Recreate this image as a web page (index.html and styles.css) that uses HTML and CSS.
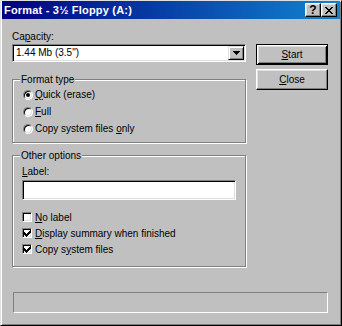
FILE: index.html
```html
<!DOCTYPE html>
<html>
<head>
<meta charset="utf-8">
<link rel="stylesheet" href="styles.css">
</head>
<body>
<div class="window">
  <div class="titlebar">
    <span class="title">Format - 3½ Floppy (A:)</span>
    <div class="tb-buttons">
      <span class="tb-btn tb-help">?</span>
      <span class="tb-btn tb-close"><svg width="8" height="7" viewBox="0 0 8 7" shape-rendering="crispEdges"><path fill="#000" d="M0 0h2v1h-2zM6 0h2v1h-2zM1 1h2v1h-2zM5 1h2v1h-2zM2 2h4v1h-4zM3 3h2v1h-2zM2 4h4v1h-4zM1 5h2v1h-2zM5 5h2v1h-2zM0 6h2v1h-2zM6 6h2v1h-2z"/></svg></span>
    </div>
  </div>
  <div class="body">
    <div class="main">
      <div class="field-label">Ca<u>p</u>acity:</div>
      <div class="select">
        <span class="select-value">1.44 Mb (3.5")</span>
        <span class="select-arrow"><svg width="7" height="4" viewBox="0 0 7 4" shape-rendering="crispEdges"><path fill="#000" d="M0 0h7v1h-7zM1 1h5v1h-5zM2 2h3v1h-3zM3 3h1v1h-1z"/></svg></span>
      </div>
      <div class="group group-format">
        <div class="legend">Format type</div>
        <div class="option radio-row"><span class="radio checked"></span><span><u>Q</u>uick (erase)</span></div>
        <div class="option radio-row"><span class="radio"></span><span><u>F</u>ull</span></div>
        <div class="option radio-row"><span class="radio"></span><span>Copy system files <u>o</u>nly</span></div>
      </div>
      <div class="group group-other">
        <div class="legend">Other options</div>
        <div class="field-label label-row"><u>L</u>abel:</div>
        <div class="textbox"></div>
        <div class="checks">
          <div class="option check-row"><span class="checkbox"></span><span><u>N</u>o label</span></div>
          <div class="option check-row"><span class="checkbox checked"><svg width="7" height="7" viewBox="0 0 7 7" shape-rendering="crispEdges"><path fill="#000" d="M6 0h1v1h-1zM5 1h2v1h-2zM0 2h1v1h-1zM4 2h3v1h-3zM0 3h2v1h-2zM3 3h3v1h-3zM0 4h5v1h-5zM1 5h3v1h-3zM2 6h1v1h-1z"/></svg></span><span><u>D</u>isplay summary when finished</span></div>
          <div class="option check-row"><span class="checkbox checked"><svg width="7" height="7" viewBox="0 0 7 7" shape-rendering="crispEdges"><path fill="#000" d="M6 0h1v1h-1zM5 1h2v1h-2zM0 2h1v1h-1zM4 2h3v1h-3zM0 3h2v1h-2zM3 3h3v1h-3zM0 4h5v1h-5zM1 5h3v1h-3zM2 6h1v1h-1z"/></svg></span><span>Copy s<u>y</u>stem files</span></div>
        </div>
      </div>
    </div>
    <div class="actions">
      <button class="btn btn-default"><u>S</u>tart</button>
      <button class="btn"><u>C</u>lose</button>
    </div>
  </div>
  <div class="status"></div>
</div>
</body>
</html>
```
FILE: styles.css
```css
* { box-sizing: border-box; }
html, body { margin: 0; padding: 0; background: #c0c0c0; }
body {
  font-family: "Liberation Sans", Arial, sans-serif;
  font-size: 10px;
  color: #000;
}
.window {
  width: 342px;
  height: 326px;
  display: flex;
  flex-direction: column;
  background: #c0c0c0;
  border: 1px solid;
  border-color: #dfdfdf #000 #000 #dfdfdf;
  box-shadow: inset 1px 1px #fff, inset -1px -1px #808080;
  padding: 0 1px 1px 1px;
}
.titlebar {
  height: 18px;
  flex: none;
  display: flex;
  align-items: center;
  padding: 0 3px 0 2px;
  background: linear-gradient(to right, #000080, #1084d0);
  color: #fff;
  font-weight: bold;
  font-size: 11px;
}
.title { flex: 1; white-space: nowrap; letter-spacing: 0.2px; }
.tb-buttons { display: flex; }
.tb-btn {
  width: 16px;
  height: 14px;
  background: #c0c0c0;
  border: 1px solid;
  border-color: #fff #000 #000 #fff;
  box-shadow: inset -1px -1px #808080, inset 1px 1px #dfdfdf;
  display: flex;
  align-items: center;
  justify-content: center;
  color: #000;
  font-weight: bold;
  font-size: 12px;
  line-height: 1;
}
.body {
  flex: none;
  display: flex;
  gap: 10px;
  padding: 11px 11px 0 10px;
}
.main { width: 234px; flex: none; }
.actions {
  width: 72px;
  flex: none;
  display: flex;
  flex-direction: column;
  gap: 4px;
  margin-top: 14px;
}
.field-label { height: 13px; line-height: 13px; }
.select {
  margin-top: 1px;
  height: 18px;
  display: flex;
  align-items: center;
  background: #fff;
  border: 1px solid;
  border-color: #808080 #fff #fff #808080;
  box-shadow: inset 1px 1px #000, inset -1px -1px #dfdfdf;
  padding: 1px;
}
.select-value { flex: 1; padding-left: 2px; line-height: 14px; }
.select-arrow {
  width: 16px;
  height: 14px;
  background: #c0c0c0;
  border: 1px solid;
  border-color: #dfdfdf #000 #000 #dfdfdf;
  box-shadow: inset 1px 1px #fff, inset -1px -1px #808080;
  display: flex;
  align-items: center;
  justify-content: center;
}
.group {
  border: 1px solid #808080;
  box-shadow: 1px 1px #fff, inset 1px 1px #fff;
  padding: 0 9px 5px 9px;
}
.group-format { margin-top: 17px; }
.group-other { margin-top: 12px; padding-bottom: 9px; }
.legend {
  display: table;
  margin: -7px 0 0 -2px;
  padding: 0 1px;
  height: 13px;
  line-height: 13px;
  background: #c0c0c0;
}
.option {
  display: flex;
  align-items: center;
  white-space: nowrap;
}
.radio-row { height: 17px; gap: 2px; }
.check-row { height: 16px; gap: 3px; }
.radio {
  width: 10px;
  height: 10px;
  margin-left: 1px;
  flex: none;
  border-radius: 50%;
  background: #fff;
  border: 1px solid;
  border-color: #808080 #fff #fff #808080;
  box-shadow: inset 1px 1px #000, inset -1px -1px #dfdfdf;
  display: flex;
  align-items: center;
  justify-content: center;
}
.radio.checked::after {
  content: "";
  width: 4px;
  height: 4px;
  border-radius: 50%;
  background: #000;
}
.label-row { margin-top: 3px; }
.textbox {
  margin-top: 2px;
  height: 20px;
  background: #fff;
  border: 1px solid;
  border-color: #808080 #fff #fff #808080;
  box-shadow: inset 1px 1px #000, inset -1px -1px #dfdfdf;
}
.checks { margin-top: 9px; }
.checkbox {
  width: 10px;
  height: 10px;
  flex: none;
  background: #fff;
  border: 1px solid;
  border-color: #808080 #fff #fff #808080;
  box-shadow: inset 1px 1px #000, inset -1px -1px #dfdfdf;
  display: flex;
  align-items: center;
  justify-content: center;
}
.checkbox svg { display: block; }
.btn {
  height: 21px;
  width: 72px;
  padding: 0;
  font: inherit;
  color: #000;
  background: #c0c0c0;
  border: 1px solid;
  border-color: #fff #000 #000 #fff;
  box-shadow: inset -1px -1px #808080, inset 1px 1px #dfdfdf;
}
.btn-default {
  border-color: #000;
  box-shadow: inset 1px 1px #fff, inset -1px -1px #000, inset 2px 2px #dfdfdf, inset -2px -2px #808080;
}
.status {
  flex: none;
  margin: auto 12px 11px 11px;
  height: 21px;
  border: 1px solid;
  border-color: #808080 #fff #fff #808080;
}
```
